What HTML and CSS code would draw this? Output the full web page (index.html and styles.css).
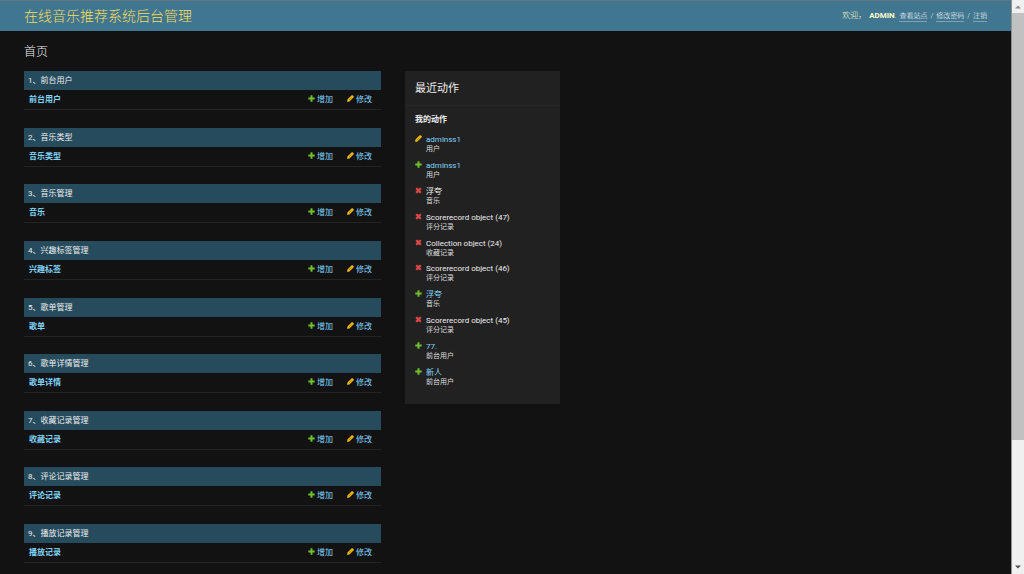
FILE: index.html
```html
<!DOCTYPE html>
<html lang="zh-CN">
<head>
<meta charset="utf-8">
<title>首页 | 在线音乐推荐系统后台管理</title>
<link rel="stylesheet" href="styles.css">
</head>
<body>
<svg class="sprite" aria-hidden="true">
  <symbol id="add" viewBox="0 0 12 12"><path fill="#70bf2b" d="M4.3 0.5h3.4v3.8h3.8v3.4H7.7v3.8H4.3V7.7H.5V4.3h3.8z"/></symbol>
  <symbol id="edit" viewBox="0 0 12 12"><path fill="#efb80b" d="M0.2 11.8l.5-4L7.600.9c.8-.8 1.800-.8 2.500-.1l1.100 1.100c.7.7.7 1.700-.1 2.500L4.200 11.300z"/><path fill="#a17c08" d="M3.400 8.300l4.400-4.400.5.5-4.400 4.400zM.2 11.800l.3-1.700 1.400 1.400z"/></symbol>
  <symbol id="del" viewBox="0 0 12 12"><path fill="#dd4646" d="M.8 3.300L3.300.8 6 3.200 8.700.8l2.500 2.500L8.800 6l2.400 2.700-2.500 2.500L6 8.800l-2.700 2.400L.8 8.700 3.200 6z"/></symbol>
</svg>
<div class="page">
  <header class="header">
    <h1 class="brand"><a href="#">在线音乐推荐系统后台管理</a></h1>
    <nav class="user-tools"><span class="welcome">欢迎，</span><span><strong>ADMIN</strong>.</span><a href="#">查看站点</a><span>/</span><a href="#">修改密码</a><span>/</span><a href="#">注销</a></nav>
  </header>
  <main class="content">
    <h2 class="page-title">首页</h2>
    <div class="columns">
      <div class="modules" id="modules"></div>
      <aside class="recent">
        <h2 class="recent-title">最近动作</h2>
        <h3 class="recent-subtitle">我的动作</h3>
        <ul class="actions">
          <li class="action"><svg class="icon"><use href="#edit"/></svg><div><a href="#">adminss1</a><span class="kind">用户</span></div></li>
          <li class="action"><svg class="icon"><use href="#add"/></svg><div><a href="#">adminss1</a><span class="kind">用户</span></div></li>
          <li class="action"><svg class="icon"><use href="#del"/></svg><div>浮夸<span class="kind">音乐</span></div></li>
          <li class="action"><svg class="icon"><use href="#del"/></svg><div>Scorerecord object (47)<span class="kind">评分记录</span></div></li>
          <li class="action"><svg class="icon"><use href="#del"/></svg><div>Collection object (24)<span class="kind">收藏记录</span></div></li>
          <li class="action"><svg class="icon"><use href="#del"/></svg><div>Scorerecord object (46)<span class="kind">评分记录</span></div></li>
          <li class="action"><svg class="icon"><use href="#add"/></svg><div><a href="#">浮夸</a><span class="kind">音乐</span></div></li>
          <li class="action"><svg class="icon"><use href="#del"/></svg><div>Scorerecord object (45)<span class="kind">评分记录</span></div></li>
          <li class="action"><svg class="icon"><use href="#add"/></svg><div><a href="#">77.</a><span class="kind">前台用户</span></div></li>
          <li class="action"><svg class="icon"><use href="#add"/></svg><div><a href="#">新人</a><span class="kind">前台用户</span></div></li>
        </ul>
      </aside>
    </div>
  </main>
</div>
<div class="scrollbar" aria-hidden="true">
  <svg class="arrow" viewBox="0 0 12 12"><path fill="#8c8c8c" d="M3 8l3-3 3 3z"/></svg>
  <div class="track"><div class="thumb"></div></div>
  <svg class="arrow" viewBox="0 0 12 12"><path fill="#505050" d="M3 4l3 3 3-3z"/></svg>
</div>
<script src="script.js"></script>
</body>
</html>
```
FILE: styles.css
```css
* { box-sizing: border-box; }
body {
  margin: 0;
  display: flex;
  min-height: 100vh;
  background: #121212;
  color: #eee;
  font: 8px/10px Roboto, "Noto Sans CJK SC", sans-serif;
}
h1, h2, h3, ul { margin: 0; padding: 0; font-weight: 400; }
ul { list-style: none; }
a { color: #81d4fa; text-decoration: none; }
.sprite { position: absolute; width: 0; height: 0; }
.icon { flex: none; width: 7px; height: 7px; }
.page { flex: 1; display: flex; flex-direction: column; }
.header {
  display: flex;
  align-items: center;
  justify-content: space-between;
  height: 31px;
  padding: 0 24px;
  border-top: 1px solid #607783;
  background: #417690;
  color: #ffc;
}
.brand { font-size: 14px; line-height: 20px; font-weight: 300; }
.brand a { color: #f5dd5d; }
.user-tools { display: flex; gap: 3px; font-size: 7px; font-weight: 300; }
.user-tools .welcome { font-size: 8px; }
.user-tools strong { font-size: 8px; font-weight: 700; }
.user-tools a { color: #fff; border-bottom: 1px solid #7fa3b4; }
.content { flex: 1; display: flex; flex-direction: column; padding: 12px 24px 11px; }
.page-title { font-size: 12px; line-height: 18px; font-weight: 300; margin-bottom: 10px; }
.columns { flex: 1; display: flex; align-items: flex-start; gap: 24px; }
.modules {
  align-self: stretch;
  flex: 0 1 357px;
  display: flex;
  flex-direction: column;
  justify-content: space-between;
}
.module { width: 100%; border-collapse: collapse; border-bottom: 1px solid #242424; }
.module caption { padding: 5px 4px 4px; background: #264b5d; text-align: left; }
.module th { padding: 5px 5px 4px; text-align: left; }
.module td { width: 39px; padding: 5px 0 4px; }
.module td:last-child { width: 34px; }
.module td a { display: flex; align-items: flex-start; gap: 2px; }
.module th a { font-weight: 700; }
.recent { flex: 0 0 155px; background: #212121; padding-bottom: 17px; }
.recent-title {
  padding: 10px 10px 9px;
  border-bottom: 1px solid #262626;
  font-size: 11px;
  line-height: 15px;
}
.recent-subtitle { padding: 8px 10px 0; font-size: 8px; font-weight: 700; line-height: 12px; }
.actions {
  display: flex;
  flex-direction: column;
  justify-content: space-between;
  min-height: 261px;
  padding: 9px 10px 0;
}
.action { display: flex; gap: 4px; line-height: 10px; }
.kind { display: block; font-size: 7px; line-height: 9px; color: #ddd; }
.scrollbar {
  flex: 0 0 13px;
  display: flex;
  flex-direction: column;
  background: #f0f0f0;
  border-left: 1px solid #8f8f8f;
}
.arrow { flex: none; width: 12px; height: 13px; }
.track { flex: 1; }
.thumb { height: 78%; background: #c1c1c1; }
```
FILE: script.js
```js
const modules = [
  ['前台用户', '前台用户'],
  ['音乐类型', '音乐类型'],
  ['音乐管理', '音乐'],
  ['兴趣标签管理', '兴趣标签'],
  ['歌单管理', '歌单'],
  ['歌单详情管理', '歌单详情'],
  ['收藏记录管理', '收藏记录'],
  ['评论记录管理', '评论记录'],
  ['播放记录管理', '播放记录'],
];
document.getElementById('modules').innerHTML = modules.map(([title, model], i) => `
  <table class="module">
    <caption>${i + 1}、${title}</caption>
    <tr>
      <th scope="row"><a href="#">${model}</a></th>
      <td><a href="#"><svg class="icon"><use href="#add"/></svg>增加</a></td>
      <td><a href="#"><svg class="icon"><use href="#edit"/></svg>修改</a></td>
    </tr>
  </table>`).join('');
```
